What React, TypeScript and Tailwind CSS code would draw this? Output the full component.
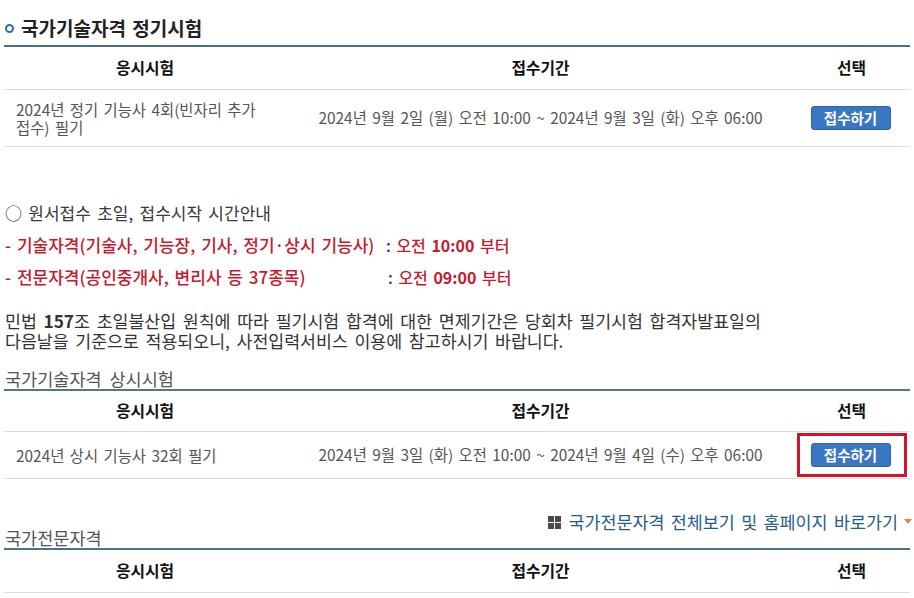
import React from "react"

type Exam = {
  name: string
  period: string
  highlight?: boolean
}

const regular: Exam[] = [
  {
    name: "2024년 정기 기능사 4회(빈자리 추가 접수) 필기",
    period: "2024년 9월 2일 (월) 오전 10:00 ~ 2024년 9월 3일 (화) 오후 06:00",
  },
]

const ondemand: Exam[] = [
  {
    name: "2024년 상시 기능사 32회 필기",
    period: "2024년 9월 3일 (화) 오전 10:00 ~ 2024년 9월 4일 (수) 오후 06:00",
    highlight: true,
  },
]

function HeaderRow({ h }: { h: string }) {
  return (
    <div className={`grid grid-cols-[282px_1fr_115px] items-center border-b border-[#dcdcdc] text-[15.8px] font-bold text-[#111] ${h}`}>
      <div className="text-center">응시시험</div>
      <div className="text-center">접수기간</div>
      <div className="pr-[2px] text-center">선택</div>
    </div>
  )
}

function ExamRow({ exam, h }: { exam: Exam; h: string }) {
  return (
    <div className={`grid grid-cols-[282px_1fr_115px] items-center border-b border-[#dcdcdc] text-[15.4px] text-[#555] [word-spacing:2px] ${h}`}>
      <div className="pl-[12px] pr-[14px] leading-[18px]">{exam.name}</div>
      <div className="text-center whitespace-nowrap">{exam.period}</div>
      <div className="relative flex h-full items-center justify-center pr-[4px]">
        <button className="h-[24px] w-[80px] rounded-[3px] border border-[#2f64a8] bg-[#3a76c2] text-[14.5px] font-bold text-white [word-spacing:0]">
          접수하기
        </button>
        {exam.highlight && (
          <div className="pointer-events-none absolute top-[1px] right-[3px] bottom-[1px] left-[2px] border-[3px] border-[#d4142a]" />
        )}
      </div>
    </div>
  )
}

export default function App() {
  return (
    <div className="w-[914px] bg-white px-[4px] pb-[6px] font-['Noto_Sans_CJK_KR','Noto_Sans',sans-serif] text-[#333]">
      {/* 정기시험 */}
      <div className="flex items-center border-b-2 border-[#4b6c8c] pt-[16px] pb-[5px] leading-[24px]">
        <span className="ml-[1px] h-[9px] w-[9px] rounded-full border-[2.5px] border-[#2e6ea6] bg-white" />
        <h2 className="ml-[7px] text-[19px] font-bold text-[#222] [word-spacing:2px]">국가기술자격 정기시험</h2>
      </div>
      <HeaderRow h="h-[43px]" />
      {regular.map((e) => (
        <ExamRow key={e.name} exam={e} h="h-[57px]" />
      ))}

      {/* 안내 */}
      <div className="mt-[50px] pl-[1px]">
        <p className="h-[32px] text-[17px] leading-[32px] text-[#3a3a3a] [word-spacing:2.5px]">○ 원서접수 초일, 접수시작 시간안내</p>
        <p className="h-[32px] whitespace-nowrap text-[16px] leading-[32px] font-medium text-[#c8182c] [word-spacing:2px]">
          <span className="inline-block w-[381px] text-[17px]">- 기술자격(기술사, 기능장, 기사, 정기·상시 기능사)</span>
          <span className="text-[#333]">: </span>오전 <b className="font-bold">10:00</b> 부터
        </p>
        <p className="h-[32px] whitespace-nowrap text-[16px] leading-[32px] font-medium text-[#c8182c] [word-spacing:2px]">
          <span className="inline-block w-[383px] text-[17px]">- 전문자격(공인중개사, 변리사 등 37종목)</span>
          <span className="text-[#333]">: </span>오전 <b className="font-bold">09:00</b> 부터
        </p>
        <p className="mt-[18px] text-[17.3px] leading-[20px] text-[#333] [word-spacing:2.8px]">
          민법 <b className="font-bold">157</b>조 초일불산입 원칙에 따라 필기시험 합격에 대한 면제기간은 당회차 필기시험 합격자발표일의
          <br />
          다음날을 기준으로 적용되오니, 사전입력서비스 이용에 참고하시기 바랍니다.
        </p>
      </div>

      {/* 상시시험 */}
      <div className="mt-[18px] border-b-2 border-[#55787f] pl-[1px] text-[17.5px] leading-[20px] text-[#555] [word-spacing:4px]">
        국가기술자격 상시시험
      </div>
      <HeaderRow h="h-[41px]" />
      {ondemand.map((e) => (
        <ExamRow key={e.name} exam={e} h="h-[47px]" />
      ))}

      {/* 전문자격 */}
      <div className="mt-[33px] flex items-end justify-between border-b-2 border-[#4d7290]">
        <div className="pl-[1px] text-[17.5px] leading-[20px] text-[#555]">국가전문자격</div>
        <a className="mb-[16px] -mr-[2px] flex items-center text-[17.4px] leading-[20px] text-[#1f5d8e] [word-spacing:2.5px]" href="#">
          <span className="mr-[7px] grid grid-cols-2 gap-[1px]">
            <span className="h-[6px] w-[6px] bg-[#4a4a4a]" />
            <span className="h-[6px] w-[6px] bg-[#4a4a4a]" />
            <span className="h-[6px] w-[6px] bg-[#4a4a4a]" />
            <span className="h-[6px] w-[6px] bg-[#4a4a4a]" />
          </span>
          국가전문자격 전체보기 및 홈페이지 바로가기
          <svg className="ml-[6px]" width="8" height="6" viewBox="0 0 8 6">
            <path d="M0 0 H8 L4 5 Z" fill="#e8862e" />
          </svg>
        </a>
      </div>
      <HeaderRow h="h-[43px]" />
    </div>
  )
}
